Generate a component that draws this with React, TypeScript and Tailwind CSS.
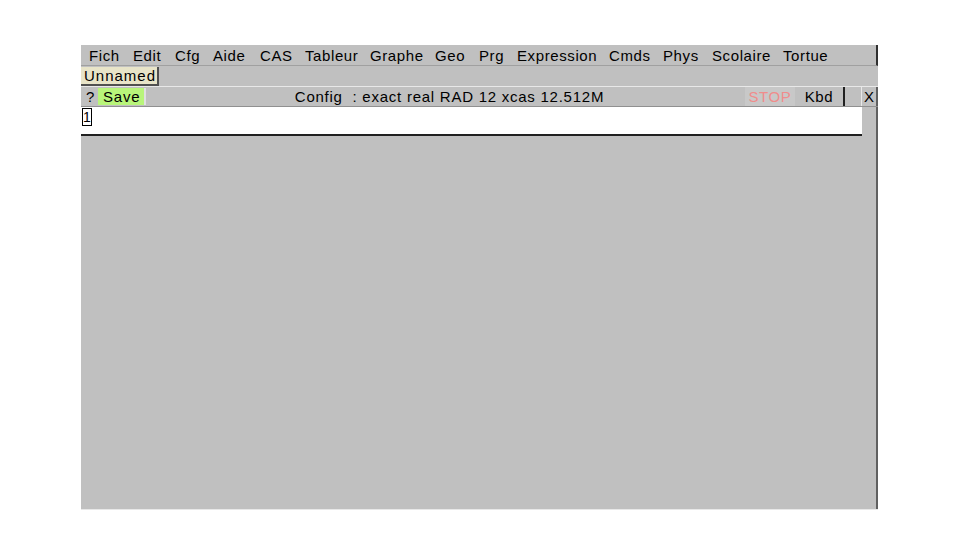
import React from "react";

const MENU = [
  { label: "Fich", w: "w-[44px]" },
  { label: "Edit", w: "w-[42px]" },
  { label: "Cfg", w: "w-[38px]" },
  { label: "Aide", w: "w-[47px]" },
  { label: "CAS", w: "w-[45px]" },
  { label: "Tableur", w: "w-[65px]" },
  { label: "Graphe", w: "w-[65px]" },
  { label: "Geo", w: "w-[44px]" },
  { label: "Prg", w: "w-[38px]" },
  { label: "Expression", w: "w-[92px]" },
  { label: "Cmds", w: "w-[54px]" },
  { label: "Phys", w: "w-[49px]" },
  { label: "Scolaire", w: "w-[71px]" },
  { label: "Tortue", w: "w-[50px]" },
];

export default function App() {
  return (
    <div
      className="w-[959px] h-[558px] bg-white pt-[45px] pl-[81px] text-[15px] leading-none text-black"
      style={{ fontFamily: '"Liberation Sans", Arial, sans-serif' }}
    >
      <div className="w-[797px] h-[465px] flex flex-col bg-[#c0c0c0] border-b border-[#e8e8e8]">
        {/* Menu bar */}
        <div className="h-[21px] flex items-center pl-[8px] border-r-2 border-[#303030] border-b border-b-[#a0a0a0]">
          {MENU.map((m) => (
            <span key={m.label} className={`${m.w} shrink-0 tracking-[0.6px]`}>
              {m.label}
            </span>
          ))}
        </div>

        {/* Tabs row */}
        <div className="h-[20px] flex items-stretch">
          <div className="w-[78px] mt-[1px] bg-[#e8e4c8] border-r-2 border-b-2 border-[#505050] flex items-center pl-[3px] tracking-[1px]">
            Unnamed
          </div>
        </div>

        {/* Status row */}
        <div className="h-[21px] flex items-stretch border-t border-[#e8e8e8] border-b border-b-[#909090]">
          <span className="w-[17px] pl-[5px] flex items-center">?</span>
          <div className="w-[48px] my-[1px] bg-[#b8f57a] border-r-2 border-[#e0e0e0] flex items-center pl-[5px] tracking-[0.8px]">
            Save
          </div>
          <div className="flex-1 flex items-center justify-center pl-[8px] tracking-[0.75px]">
            Config &nbsp;: exact real RAD 12 xcas 12.512M
          </div>
          <div className="w-[50px] bg-[#c8c8c8] text-[#f08c8c] flex items-center justify-center tracking-[0.6px]">
            STOP
          </div>
          <div className="w-[50px] border-r-2 border-[#202020] flex items-center justify-center tracking-[0.6px]">
            Kbd
          </div>
          <div className="w-[16px]" />
          <div className="w-[17px] border-l border-[#e8e8e8] border-r-2 border-r-[#606060] flex items-center justify-center">
            X
          </div>
        </div>

        {/* Work area */}
        <div className="flex-1 flex">
          <div className="flex-1 flex flex-col">
            <div className="h-[29px] bg-white border-b-2 border-[#202020] flex items-start">
              <div className="w-[10px] h-[18px] mt-[1px] ml-[1px] border border-black flex items-center justify-center text-[14px]">
                1
              </div>
            </div>
          </div>
          <div className="w-[16px] border-r-2 border-[#606060]" />
        </div>
      </div>
    </div>
  );
}
